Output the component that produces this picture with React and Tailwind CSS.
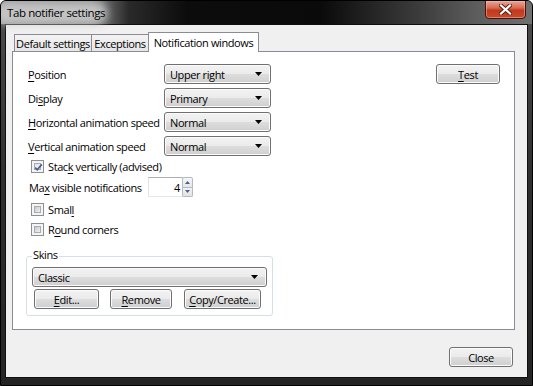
import React from "react";

const F = { fontFamily: '"Open Sans", "Noto Sans", sans-serif' };

function U({ children }) {
  return <span className="underline underline-offset-[2px] decoration-[1px]">{children}</span>;
}

const btnBg =
  "bg-[linear-gradient(to_bottom,#f2f2f2_0%,#ebebeb_48%,#dddddd_52%,#cfcfcf_100%)] border border-[#707070] rounded-[3px] shadow-[inset_0_0_0_1px_#fbfbfb]";

function Button({ className = "", children }) {
  return (
    <div className={`${btnBg} flex items-center justify-center text-[11px] text-black leading-none whitespace-nowrap ${className}`}>
      {children}
    </div>
  );
}

function Arrow() {
  return (
    <svg width="7" height="4" viewBox="0 0 7 4" className="shrink-0">
      <path d="M0 0H7L3.5 4Z" fill="#000" />
    </svg>
  );
}

function Select({ className = "", value }) {
  return (
    <div className={`${btnBg} flex items-center justify-between pl-[5px] pr-[8px] text-[11px] text-black leading-none whitespace-nowrap ${className}`}>
      <span>{value}</span>
      <Arrow />
    </div>
  );
}

function Checkbox({ checked }) {
  return (
    <div className="w-[13px] h-[13px] border border-[#8e8f8f] bg-[#f4f4f4] p-[2px] shrink-0">
      <div className={`w-full h-full border border-[#a9acb3] relative ${checked ? "bg-[linear-gradient(135deg,#dcdfe4_0%,#eef0f2_60%,#fafafa_100%)]" : "bg-[linear-gradient(135deg,#c4c8cf_0%,#dfe1e6_60%,#f2f2f2_100%)]"}`}>
        {checked && (
          <svg width="11" height="11" viewBox="0 0 11 11" className="absolute left-[-2px] top-[-2px]">
            <path d="M2.2 5.6 L4.3 7.8 L8.8 2.4" fill="none" stroke="#4a5f8f" strokeWidth="1.7" />
          </svg>
        )}
      </div>
    </div>
  );
}

function SpinArrow({ up }) {
  return (
    <svg width="5" height="3" viewBox="0 0 5 3">
      <path d={up ? "M0 3H5L2.5 0Z" : "M0 0H5L2.5 3Z"} fill="#4d6185" />
    </svg>
  );
}

export default function App() {
  return (
    <div
      style={F}
      className="relative w-[533px] h-[386px] bg-[#2c2c2c] border border-black rounded-t-[6px] flex flex-col overflow-hidden whitespace-nowrap tracking-[-0.4px]"
    >
      {/* title bar */}
      <div className="h-[23px] shrink-0 bg-[linear-gradient(to_right,#9a9a9a_0%,#8a8a8a_17%,#2a2a2a_24%,#0c0c0c_35%,#0a0a0a_60%,#3a3a3a_78%,#5e5e5e_90%,#707070_100%)] flex items-center pl-[6px] relative">
        <div className="absolute left-[-6px] top-[1px] w-[112px] h-[22px] rounded-[10px] bg-[#c9c9c9] blur-[4px] opacity-90" />
        <span className="relative text-[11.5px] text-black leading-none">Tab notifier settings</span>
        <div className="absolute top-[-1px] right-[6px] w-[41px] h-[19px] rounded-b-[4px] border border-[#4a1207] bg-[linear-gradient(to_bottom,#e9a696_0%,#d86a52_40%,#c2391c_55%,#c94a2e_100%)] shadow-[inset_0_0_0_1px_rgba(255,200,190,0.45)] flex items-center justify-center">
          <svg width="13" height="11" viewBox="0 0 13 11">
            <path d="M2 1.5 L11 9.5 M11 1.5 L2 9.5" stroke="#5a1a10" strokeWidth="4" strokeLinecap="square" />
            <path d="M2 1.5 L11 9.5 M11 1.5 L2 9.5" stroke="#ffffff" strokeWidth="2.2" strokeLinecap="square" />
          </svg>
        </div>
      </div>

      {/* frame + client */}
      <div className="flex-1 flex px-[4px] pb-[7px] bg-[linear-gradient(to_bottom,#4a4a4a_0%,#303030_40%,#242424_100%)]">
        <div className="flex-1 border border-[#101010] bg-[#f0f0f0] flex flex-col text-black text-[11px]">
          {/* tabs */}
          <div className="h-[19px] mt-[7px] ml-[7px] flex items-end relative z-10">
            <div className="h-[17px] w-[78px] ml-[1px] border border-b-0 border-[#898c95] bg-[linear-gradient(to_bottom,#f3f3f3,#e6e6e6)] flex items-center justify-center leading-none">
              Default settings
            </div>
            <div className="h-[17px] w-[58px] -ml-px border border-b-0 border-[#898c95] bg-[linear-gradient(to_bottom,#f3f3f3,#e6e6e6)] flex items-center justify-center leading-none">
              Exceptions
            </div>
            <div className="h-[20px] w-[111px] -ml-px -mb-px border border-b-0 border-[#898c95] bg-white flex items-center justify-center leading-none pb-[1px]">
              Notification windows
            </div>
          </div>

          {/* panel */}
          <div className="ml-[6px] w-[503px] h-[279px] border border-[#898c95] bg-white flex pt-[12px] pl-[15px] pr-[14px]">
            <div className="flex flex-col w-[246px]">
              <div className="flex items-center h-[20px] mb-[4px]">
                <span className="w-[136px] leading-none"><U>P</U>osition</span>
                <Select className="w-[107px] h-[20px]" value="Upper right" />
              </div>
              <div className="flex items-center h-[20px] mb-[4px]">
                <span className="w-[136px] leading-none">Di<U>s</U>play</span>
                <Select className="w-[107px] h-[20px]" value="Primary" />
              </div>
              <div className="flex items-center h-[20px] mb-[4px]">
                <span className="w-[136px] leading-none"><U>H</U>orizontal animation speed</span>
                <Select className="w-[107px] h-[20px]" value="Normal" />
              </div>
              <div className="flex items-center h-[20px]">
                <span className="w-[136px] leading-none"><U>V</U>ertical animation speed</span>
                <Select className="w-[107px] h-[20px]" value="Normal" />
              </div>

              <div className="flex items-center h-[20px] pl-[3px] gap-[4px]">
                <Checkbox checked />
                <span className="leading-none">Stac<U>k</U> vertically (advised)</span>
              </div>

              <div className="flex items-center h-[20px] mt-[1px] pl-[1px]">
                <span className="w-[119px] leading-none">Ma<U>x</U> visible notifications</span>
                <div className="flex h-[20px]">
                  <div className="w-[35px] h-[20px] border border-[#abadb3] border-l-[#e2e3ea] border-r-[#e2e3ea] border-b-[#e3e9ef] bg-white flex items-center justify-end pr-[2px] leading-none">
                    4
                  </div>
                  <div className="flex flex-col w-[11px] h-[20px] ml-[-1px]">
                    <div className="flex-1 border border-[#b6b9c2] rounded-t-[2px] bg-[linear-gradient(to_bottom,#f7f7f7,#e4e6ea)] flex items-center justify-center">
                      <SpinArrow up />
                    </div>
                    <div className="flex-1 border border-t-0 border-[#b6b9c2] rounded-b-[2px] bg-[linear-gradient(to_bottom,#f2f3f5,#e0e2e7)] flex items-center justify-center">
                      <SpinArrow />
                    </div>
                  </div>
                </div>
              </div>

              <div className="flex items-center h-[20px] mt-[2px] pl-[3px] gap-[4px]">
                <Checkbox />
                <span className="leading-none">Smal<U>l</U></span>
              </div>
              <div className="flex items-center h-[20px] pl-[3px] gap-[4px]">
                <Checkbox />
                <span className="leading-none">R<U>o</U>und corners</span>
              </div>

              {/* Skins group */}
              <div className="relative mt-[17px] ml-[-2px] w-[247px] h-[60px] border border-[#d5dfe5] rounded-[3px] pt-[10px] pl-[5px]">
                <span className="absolute left-[5px] top-[-8px] bg-white px-[1px] leading-none">Skins</span>
                <Select className="w-[235px] h-[20px]" value="Classic" />
                <div className="flex mt-[2px] ml-[2px] h-[20px]">
                  <Button className="w-[65px] h-[20px]"><U>E</U>dit...</Button>
                  <Button className="w-[62px] h-[20px] ml-[11px]"><U>R</U>emove</Button>
                  <Button className="w-[77px] h-[20px] ml-[12px]"><U>C</U>opy/Create...</Button>
                </div>
              </div>
            </div>

            <div className="ml-auto">
              <Button className="w-[64px] h-[20px]"><U>T</U>est</Button>
            </div>
          </div>

          {/* footer */}
          <div className="flex justify-end mt-[17px] pr-[14px]">
            <Button className="w-[64px] h-[20px]">Close</Button>
          </div>
        </div>
      </div>
    </div>
  );
}
